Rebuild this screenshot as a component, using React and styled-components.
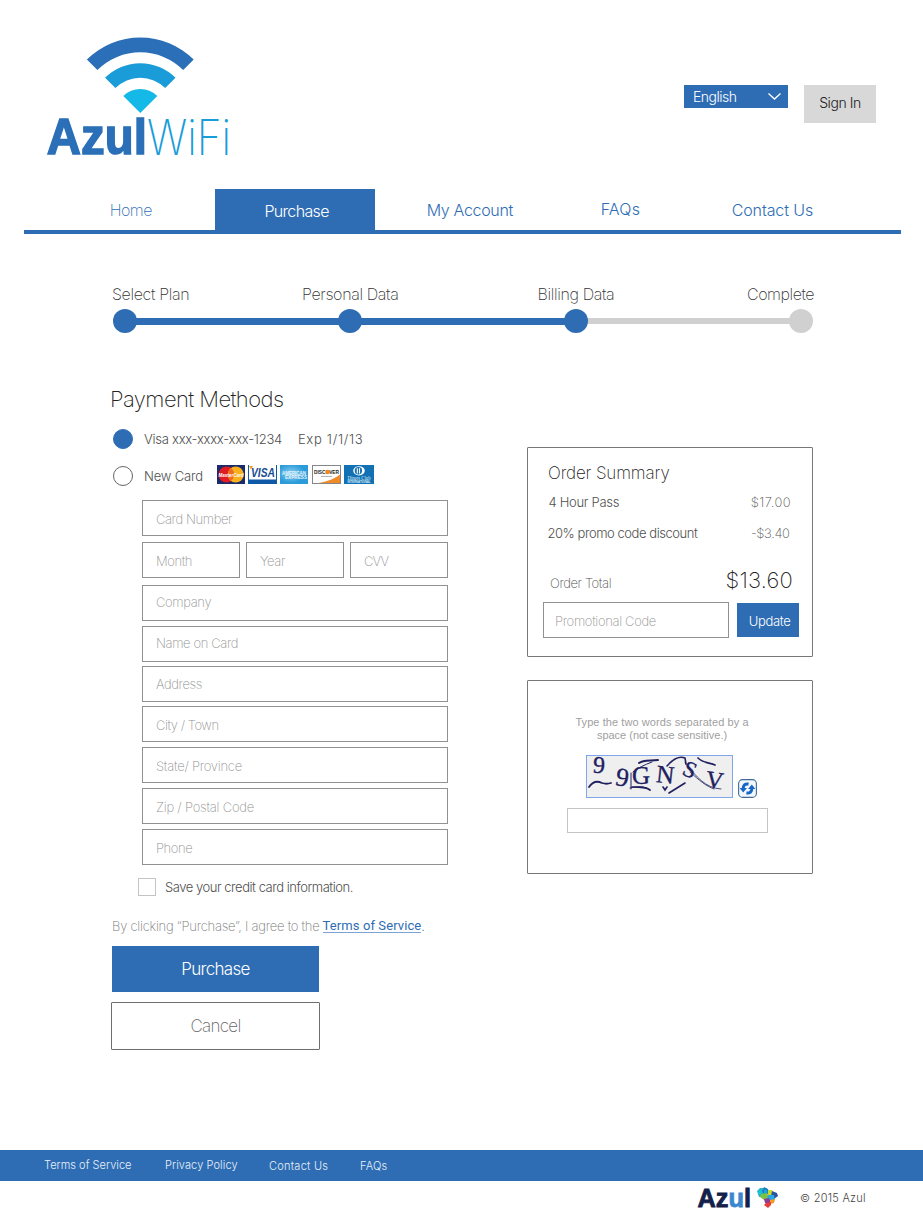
import React from 'react';
import styled, { createGlobalStyle } from 'styled-components';

const blue = '#2e6db4';

const Global = createGlobalStyle`
  *, *::before, *::after { box-sizing: border-box; }
  body { margin: 0; background: #fff; font-family: Inter, "Liberation Sans", sans-serif; font-weight: 300; }
  button { font: inherit; border: 0; padding: 0; border-radius: 0; cursor: pointer; }
  a { color: inherit; text-decoration: none; }
  h1, h2 { margin: 0; }
  svg { display: block; overflow: visible; }
`;

const Page = styled.div`width: 923px; height: 1216px; display: flex; flex-direction: column; overflow: hidden;`;

const Text = styled.span`
  display: block;
  white-space: nowrap;
  font-size: ${p => p.$size || 13}px;
  font-weight: ${p => p.$weight || 300};
  letter-spacing: ${p => p.$ls || 0}px;
  line-height: ${p => p.$lh || 20}px;
  color: ${p => p.$color || '#505050'};
`;

/* header */
const Header = styled.header`height: 189px; display: flex; align-items: flex-start; padding: 30px 47px 0 40px;`;
const HeaderActions = styled.div`margin: 55px 0 0 auto; display: flex; align-items: flex-start; gap: 16px;`;
const LanguageSelect = styled.button`
  width: 104px; height: 23px; padding: 0 6px 0 9px; background: ${blue};
  display: flex; align-items: center; justify-content: space-between;
`;
const SignIn = styled.button`width: 72px; height: 38px; background: #d8d8d8; display: flex; justify-content: center;`;

/* navigation */
const Nav = styled.nav`height: 45px; margin: 0 22px 0 24px; border-bottom: 4px solid ${blue}; display: flex;`;
const NavItem = styled.a`
  width: ${p => p.$w}px; height: 41px; padding-left: ${p => p.$pad}px;
  background: ${p => (p.$active ? blue : 'transparent')};
`;

/* progress */
const Progress = styled.section`margin: 50px 0 0 112px; height: 49px; width: 704px;`;
const StepLabels = styled.div`display: grid; grid-template-columns: 190px 235.5px 209.5px auto; height: 25px;`;
const Track = styled.div`display: flex; align-items: center; width: 700px; margin-left: 1px;`;
const Dot = styled.div`
  position: relative; z-index: 1; width: 24px; height: 24px; border-radius: 50%; flex: none;
  background: ${p => (p.$done ? blue : '#d0d0d0')};
`;
const Bar = styled.div`height: ${p => (p.$done ? 7 : 6)}px; flex: 1; margin: 0 -1px; background: ${p => (p.$done ? blue : '#d0d0d0')};`;

/* content */
const Main = styled.main`display: flex; height: 817px; padding-left: 110px;`;
const PaymentColumn = styled.section`width: 417px; padding-top: 54px;`;
const SideColumn = styled.aside`width: 286px; padding-top: 114px;`;
const MethodRow = styled.div`display: flex; align-items: center; height: 21px; margin-top: ${p => p.$mt}px; padding-left: 3px;`;
const Radio = styled.span`
  width: 20px; height: 20px; border-radius: 50%; flex: none; margin-right: 11px;
  background: ${p => (p.$on ? blue : '#fff')}; border: 1px solid ${p => (p.$on ? blue : '#666')};
`;
const Expiry = styled.div`margin-left: 16px;`;
const CardLogos = styled.div`display: flex; gap: 3.3px; margin: -2px 0 0 14px;`;
const Form = styled.div`width: 306px; margin: 14px 0 0 32px;`;
const FieldRow = styled.div`display: flex; gap: 6px;`;
const Field = styled.div`
  width: ${p => p.$w || 306}px; height: 36px; margin-top: ${p => p.$mt || 0}px;
  padding-left: ${p => p.$pad || 13}px; border: 1px solid #919191; background: #fff;
`;
const SaveRow = styled.label`display: flex; align-items: center; margin: 13px 0 0 28px; height: 18px;`;
const Checkbox = styled.span`width: 18px; height: 18px; border: 1px solid #c4c4c4; margin-right: 9px;`;
const Agreement = styled.p`display: flex; margin: 20px 0 0 2px; height: 20px;`;
const TermsLink = styled.a`
  height: 17px; margin-left: 3px; border-bottom: 1px solid #7ba3d3;
  font: 400 13px/20px Roboto, "Liberation Sans", sans-serif; letter-spacing: 0.1px; color: ${blue};
`;
const PrimaryButton = styled.button`
  width: ${p => p.$w}px; height: ${p => p.$h}px; margin: ${p => p.$m || 0};
  background: ${blue}; display: flex; justify-content: center;
`;
const CancelButton = styled.button`
  width: 209px; height: 48px; margin: 10px 0 0 1px; background: #fff;
  border: 1px solid #6e6e6e; border-radius: 1px; display: flex; justify-content: center;
`;
const Card = styled.div`border: 1px solid #777; border-radius: 1px; height: ${p => p.$h}px;`;
const SummaryCard = styled(Card)`padding: 15px 13px 0 15px;`;
const SummaryRow = styled.div`
  display: flex; justify-content: space-between; align-items: flex-start;
  height: ${p => p.$h}px; padding: 0 ${p => p.$pr || 0}px 0 ${p => p.$pl || 0}px;
`;
const PromoRow = styled.div`display: flex; gap: 8px; align-items: center;`;
const CaptchaCard = styled(Card)`margin-top: 23px; padding: 35px 0 0 39px;`;
const CaptchaHint = styled.div`width: 190px; display: flex; flex-direction: column; align-items: center; font-family: "Liberation Sans", sans-serif;`;
const CaptchaRow = styled.div`display: flex; align-items: flex-end; gap: 5px; margin: 13px 0 0 19px;`;
const CaptchaInput = styled.div`width: 201px; height: 25px; margin-top: 10px; border: 1px solid #c4c4c4;`;

/* footer */
const FooterBar = styled.footer`height: 31px; background: ${blue}; display: flex; padding-left: 44px; flex: none;`;
const FooterLink = styled.a`width: ${p => p.$w}px; padding-top: ${p => p.$pt || 0}px;`;
const Legal = styled.div`height: 35px; display: flex; gap: 15px; padding-left: 695px; flex: none;`;

function AzulWifiLogo() {
  return (
    <svg width="200" height="140" viewBox="40 30 200 140" role="img" aria-label="Azul WiFi">
      <path d="M86.9 59.6A75.5 75.5 0 0 1 193.7 59.6L183.2 70.1A60.7 60.7 0 0 0 97.4 70.1Z" fill="#2a6fb7" />
      <path d="M105.1 77.8A49.7 49.7 0 0 1 175.5 77.8L165.2 88.1A35.2 35.2 0 0 0 115.4 88.1Z" fill="#199cd8" />
      <path d="M123.3 96A24 24 0 0 1 157.3 96L140.3 113Z" fill="#14b9e8" />
      <text x="46.8" y="154" fontFamily="Liberation Sans" fontWeight="700" fontSize="50" textLength="100" lengthAdjust="spacingAndGlyphs" fill="#2a6fb7" stroke="#2a6fb7" strokeWidth="1.5">Azul</text>
      <text x="147" y="154.6" fontFamily="Inter" fontWeight="200" fontSize="49" textLength="84" lengthAdjust="spacingAndGlyphs" fill="#199cd8">WiFi</text>
    </svg>
  );
}

function Mastercard() {
  return (
    <svg width="28" height="19" viewBox="0 0 28 19">
      <rect width="28" height="19" fill="#1b2a6b" />
      <circle cx="9.5" cy="9.5" r="8" fill="#e01b22" />
      <circle cx="18.7" cy="9.5" r="8" fill="#f8b11c" />
      <path d="M14.1 3.2a8 8 0 0 1 0 12.6 8 8 0 0 1 0-12.6z" fill="#ee6a1e" />
      <text x="14" y="12" textAnchor="middle" fontFamily="Liberation Sans" fontWeight="700" fontStyle="italic" fontSize="6" textLength="25" lengthAdjust="spacingAndGlyphs" fill="#fff">MasterCard</text>
    </svg>
  );
}
function Visa() {
  return (
    <svg width="29" height="19" viewBox="0 0 29 19">
      <rect width="29" height="19" fill="#1059a6" />
      <rect x="1" y="0" width="27" height="14.5" fill="#fff" />
      <path d="M1 1h4L3 4.5 2 3z" fill="#f0a21c" />
      <text x="15" y="11.7" textAnchor="middle" fontFamily="Liberation Sans" fontWeight="700" fontStyle="italic" fontSize="12" textLength="24" lengthAdjust="spacingAndGlyphs" fill="#164c93">VISA</text>
    </svg>
  );
}
function Amex() {
  return (
    <svg width="28" height="19" viewBox="0 0 28 19">
      <defs>
        <radialGradient id="amex" cx="40%" cy="45%"><stop offset="0" stopColor="#8fd0f2" /><stop offset="1" stopColor="#2b9bd9" /></radialGradient>
      </defs>
      <rect width="28" height="19" fill="url(#amex)" />
      <text x="2" y="10" fontFamily="Liberation Sans" fontWeight="700" fontSize="4.6" textLength="24" lengthAdjust="spacingAndGlyphs" fill="#e6f4fc">AMERICAN</text>
      <text x="5" y="14.2" fontFamily="Liberation Sans" fontWeight="700" fontSize="4.6" textLength="22" lengthAdjust="spacingAndGlyphs" fill="#e6f4fc">EXPRESS</text>
    </svg>
  );
}
function Discover() {
  return (
    <svg width="29" height="19" viewBox="0 0 29 19">
      <rect x=".5" y=".5" width="28" height="18" fill="#fff" stroke="#85868a" />
      <path d="M28 9.5C24 13 16 16.5 7 18h21z" fill="#f08a24" />
      <text x="2" y="9" fontFamily="Liberation Sans" fontWeight="700" fontSize="5.8" textLength="25" lengthAdjust="spacingAndGlyphs" fill="#222">DISCOVER</text>
      <circle cx="15.8" cy="7" r="2.3" fill="#f08a24" />
      <path d="M9 11.4h11" stroke="#999" strokeWidth=".8" />
    </svg>
  );
}
function Diners() {
  return (
    <svg width="30" height="19" viewBox="0 0 30 19">
      <rect width="30" height="19" fill="#1271b4" />
      <ellipse cx="15" cy="5.8" rx="5.8" ry="4.6" fill="#fff" />
      <circle cx="14.4" cy="5.8" r="3.7" fill="#1271b4" />
      <path d="M13.3 3.2v5.2M15.5 3.2v5.2" stroke="#fff" strokeWidth="1.1" />
      <text x="3.5" y="14.8" fontFamily="Liberation Serif" fontSize="6" textLength="23" lengthAdjust="spacingAndGlyphs" fill="#dcecf7">Diners Club</text>
      <text x="3.5" y="17.6" fontFamily="Liberation Sans" fontWeight="700" fontSize="2.6" textLength="23" lengthAdjust="spacingAndGlyphs" fill="#dcecf7">INTERNATIONAL</text>
    </svg>
  );
}

function Captcha() {
  return (
    <svg width="147" height="43" viewBox="0 0 147 43">
      <rect x=".5" y=".5" width="146" height="42" fill="#efefef" stroke="#7ea6e8" />
      <g fontFamily="Liberation Serif" fill="#20205f" stroke="#20205f" strokeWidth=".35">
        <text x="7" y="18" fontSize="24" transform="rotate(4 13 12)">9</text>
        <text x="30" y="31" fontSize="26" transform="rotate(10 36 22)">9</text>
        <text x="46" y="29" fontSize="25">G</text>
        <text x="70" y="28" fontSize="25" transform="rotate(6 79 22)">N</text>
        <text x="97" y="22" fontSize="23" transform="rotate(24 103 16)">S</text>
        <text x="120" y="33" fontSize="24" transform="rotate(8 128 25)">V</text>
      </g>
      <g fill="none" stroke="#20205f" strokeLinecap="round">
        <path d="M3 32c4-6 9-6 13-4 3 1 6 1 9 0" strokeWidth="1.8" />
        <path d="M53 8c4-3 10-2 19-3" strokeWidth="2" />
        <path d="M66 7C58 10 52 13 47 17M45 18v16M44 33c7-2 16-2 20 2" strokeWidth="1" />
        <path d="M46 32c8 0 14 0 18 3" strokeWidth="1.7" />
        <path d="M77 32l2 3 2-3M83 38l16-10M81 11C88 3 93 1 99 3l1 6" strokeWidth="1.6" />
        <path d="M112 3c5 5 10 4 17 7" strokeWidth="1.7" />
        <path d="M99 8c12 14 20 25 36 26M104 17c10 9 16 14 24 17" strokeWidth=".8" />
      </g>
    </svg>
  );
}

function RefreshIcon() {
  return (
    <svg width="19" height="19" viewBox="0 0 19 19">
      <rect x=".6" y=".6" width="17.8" height="17.8" rx="4" fill="#f3f7fb" stroke="#3f6c97" strokeWidth="1.1" />
      <path d="M5.2 10C5 6.4 7 4.4 10.6 5" fill="none" stroke="#1668c8" strokeWidth="3" />
      <path d="M1.6 9h7.4l-3.8 4.4z" fill="#1668c8" />
      <path d="M13.8 9c.2 3.6-1.8 5.6-5.4 5" fill="none" stroke="#1668c8" strokeWidth="3" />
      <path d="M17.4 10H10l3.8-4.4z" fill="#1668c8" />
    </svg>
  );
}

function AzulFooterLogo() {
  return (
    <svg width="90" height="35" viewBox="695 1181 90 35">
      <g fontFamily="Liberation Sans" fontWeight="700" fontSize="26" strokeWidth=".8">
        <text x="697.5" y="1207.2" textLength="53.5" lengthAdjust="spacingAndGlyphs" fill="#12204a" stroke="#12204a">Az<tspan fill="#3a86cf" stroke="#3a86cf">u</tspan>l</text>
      </g>
      <path d="M757 1191l3-3h4l1 4-2 5h-4z" fill="#22b6c9" />
      <path d="M764 1187l4 2 1 5-5 1-2-4z" fill="#1e7fc2" />
      <path d="M768 1190l4 0 1 5-5 1z" fill="#c7d92d" />
      <path d="M772 1191l5 2 1 3-4 3-3-3z" fill="#2c52a0" />
      <path d="M761 1194l6-1 2 5-5 2-4-3z" fill="#7dc242" />
      <path d="M768 1195l6 0 1 5-5 2-3-3z" fill="#29a8df" />
      <path d="M764 1199l5-1 2 4-3 2-3-1z" fill="#8a3f98" />
      <path d="M770 1200l5-1-1 4-4 1z" fill="#f59a23" />
      <path d="M766 1203l5-1 0 3-3 3-4-3z" fill="#e63b3a" />
      <path d="M758 1191h3v3h-3z" fill="#19c0dc" />
      <path d="M764 1190h3v3h-3z" fill="#19a8dc" />
    </svg>
  );
}

const navItems = [
  { t: 'Home', w: 191, pad: 85.7, lh: 43, ls: -0.52, weight: 250 },
  { t: 'Purchase', w: 160, pad: 49.4, lh: 45, ls: -0.66, active: true },
  { t: 'My Account', w: 174, pad: 51.7, lh: 43, ls: -0.33 },
  { t: 'FAQs', w: 130, pad: 51.7, lh: 41, ls: 0.2 },
  { t: 'Contact Us', w: 150, pad: 52.7, lh: 43, ls: -0.11 },
];
const steps = [['Select Plan', -0.34], ['Personal Data', -0.36], ['Billing Data', -0.36], ['Complete', -0.45]];
const fields = [
  { t: 'Company', mt: 7, dy: -1, ls: -0.36 },
  { t: 'Name on Card', mt: 5, dy: -1, ls: -0.38 },
  { t: 'Address', mt: 4, dy: 0, ls: -0.4 },
  { t: 'City / Town', mt: 4, dy: 1, ls: -0.46 },
  { t: 'State/ Province', mt: 5, dy: 1, ls: -0.24 },
  { t: 'Zip / Postal Code', mt: 5, dy: 1, ls: -0.22 },
  { t: 'Phone', mt: 5, dy: 1, ls: -0.43 },
];
const footerLinks = [
  { t: 'Terms of Service', w: 121, ls: 0.03 },
  { t: 'Privacy Policy', w: 104, ls: 0.1 },
  { t: 'Contact Us', w: 91, ls: 0.25, pt: 1 },
  { t: 'FAQs', w: 60, ls: 0.2, pt: 1 },
];

const Placeholder = ({ dy = 0, ls, children }) => (
  <Text $weight={250} $color="#929292" $lh={34 + dy * 2} $ls={ls}>{children}</Text>
);

export default function App() {
  return (
    <Page>
      <Global />
      <Header>
        <AzulWifiLogo />
        <HeaderActions>
          <LanguageSelect>
            <Text $size={14} $color="#fff" $ls={-0.5} $lh={23}>English</Text>
            <svg width="15" height="9" viewBox="0 0 15 9"><path d="M1.5 1.5l6 5.5 6-5.5" fill="none" stroke="#fff" strokeWidth="1.3" /></svg>
          </LanguageSelect>
          <SignIn><Text $size={14} $color="#222" $ls={-0.44} $lh={36}>Sign In</Text></SignIn>
        </HeaderActions>
      </Header>
      <Nav>
        {navItems.map(n => (
          <NavItem key={n.t} href="#" $w={n.w} $pad={n.pad} $active={n.active}>
            <Text $size={16} $weight={n.weight} $ls={n.ls} $lh={n.lh} $color={n.active ? '#fff' : blue}>{n.t}</Text>
          </NavItem>
        ))}
      </Nav>
      <Progress>
        <StepLabels>
          {steps.map(([t, ls]) => <Text key={t} $size={16} $weight={250} $ls={ls} $lh={21} $color="#333">{t}</Text>)}
        </StepLabels>
        <Track>
          <Dot $done /><Bar $done /><Dot $done /><Bar $done /><Dot $done /><Bar /><Dot />
        </Track>
      </Progress>
      <Main>
        <PaymentColumn>
          <Text as="h1" $size={22} $weight={250} $lh={25} $ls={-0.58} $color="#222">Payment Methods</Text>
          <MethodRow $mt={16}>
            <Radio $on />
            <Text $ls={-0.26}>Visa xxx-xxxx-xxx-1234</Text>
            <Expiry><Text $ls={0.7}>Exp 1/1/13</Text></Expiry>
          </MethodRow>
          <MethodRow $mt={16}>
            <Radio />
            <Text $ls={-0.19} $lh={22}>New Card</Text>
            <CardLogos><Mastercard /><Visa /><Amex /><Discover /><Diners /></CardLogos>
          </MethodRow>
          <Form>
            <Field><Placeholder dy={1} ls={-0.4}>Card Number</Placeholder></Field>
            <FieldRow>
              <Field $w={98} $mt={6}><Placeholder dy={1} ls={-0.4}>Month</Placeholder></Field>
              <Field $w={98} $mt={6}><Placeholder dy={1} ls={-0.4}>Year</Placeholder></Field>
              <Field $w={98} $mt={6}><Placeholder dy={1} ls={-0.9}>CVV</Placeholder></Field>
            </FieldRow>
            {fields.map(f => (
              <Field key={f.t} $mt={f.mt}><Placeholder dy={f.dy} ls={f.ls}>{f.t}</Placeholder></Field>
            ))}
          </Form>
          <SaveRow><Checkbox /><Text $ls={-0.47} $lh={18}>Save your credit card information.</Text></SaveRow>
          <Agreement>
            <Text $weight={250} $color="#777" $ls={-0.24}>By clicking “Purchase”, I agree to the</Text>
            <TermsLink href="#">Terms of Service</TermsLink>
            <Text $color={blue}>.</Text>
          </Agreement>
          <PrimaryButton $w={207} $h={46} $m="10px 0 0 2px"><Text $size={17} $ls={-0.71} $lh={46} $color="#fff">Purchase</Text></PrimaryButton>
          <CancelButton><Text $size={17} $weight={250} $ls={-0.7} $lh={46} $color="#666">Cancel</Text></CancelButton>
        </PaymentColumn>
        <SideColumn>
          <SummaryCard $h={210}>
            <SummaryRow $h={29} $pl={5}><Text as="h2" $size={17} $weight={250} $ls={-0.14} $lh={21} $color="#222">Order Summary</Text></SummaryRow>
            <SummaryRow $h={31} $pl={5.5} $pr={8}><Text $ls={-0.29}>4 Hour Pass</Text><Text $weight={250} $ls={0.45}>$17.00</Text></SummaryRow>
            <SummaryRow $h={46} $pl={4.5} $pr={9.5}><Text $ls={-0.45}>20% promo code discount</Text><Text $weight={250} $ls={-0.35}>-$3.40</Text></SummaryRow>
            <SummaryRow $h={33} $pl={7} $pr={6}><Text $weight={250} $ls={-0.4} $lh={29}>Order Total</Text><Text $size={22} $weight={250} $lh={23} $ls={0.2} $color="#222">$13.60</Text></SummaryRow>
            <PromoRow>
              <Field $w={186} $pad={11}><Placeholder dy={1} ls={-0.33}>Promotional Code</Placeholder></Field>
              <PrimaryButton $w={62} $h={34}><Text $ls={-0.35} $lh={36} $color="#fff">&nbsp;Update</Text></PrimaryButton>
            </PromoRow>
          </SummaryCard>
          <CaptchaCard $h={194}>
            <CaptchaHint>
              <Text $size={11} $weight={400} $lh={13} $ls={0.08} $color="#a0a0a0">Type the two words separated by a</Text>
              <Text $size={11} $weight={400} $lh={13} $color="#a0a0a0">space (not case sensitive.)</Text>
            </CaptchaHint>
            <CaptchaRow><Captcha /><RefreshIcon /></CaptchaRow>
            <CaptchaInput />
          </CaptchaCard>
        </SideColumn>
      </Main>
      <FooterBar>
        {footerLinks.map(f => (
          <FooterLink key={f.t} href="#" $w={f.w} $pt={f.pt}><Text $size={11} $lh={30} $ls={f.ls} $color="#e8f0f9">{f.t}</Text></FooterLink>
        ))}
      </FooterBar>
      <Legal>
        <AzulFooterLogo />
        <Text $size={11} $lh={35} $ls={0.25} $color="#444">© 2015 Azul</Text>
      </Legal>
    </Page>
  );
}
